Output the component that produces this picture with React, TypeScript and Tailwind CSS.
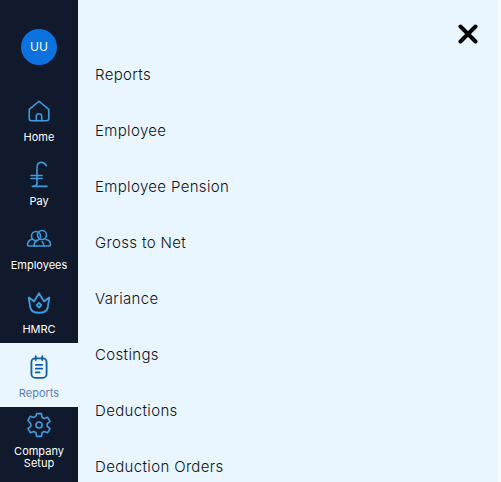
const iconClass = "w-[26px] h-[26px] text-[#3f9be0]";

function HomeIcon() {
	return (
		<svg viewBox="0 0 24 24" fill="none" stroke="currentColor" strokeWidth="1.5" strokeLinejoin="round" strokeLinecap="round" className={iconClass}>
			<path d="M3 10.500 12 3l9 7.500V19a2 2 0 0 1-2 2H5a2 2 0 0 1-2-2z" />
			<path d="M9.500 21v-4a2.500 2.500 0 0 1 5 0v4" />
		</svg>
	);
}

function PoundIcon() {
	return (
		<svg viewBox="0 0 24 24" fill="none" stroke="currentColor" strokeWidth="1.2" strokeLinecap="round" strokeLinejoin="round" className="w-[32px] h-[32px] text-[#3f9be0]">
			<path d="M17.500 5c-1-2-2.500-2.500-4-2.500-2 0-3 2-3 4.500v11c0 1.500-1.500 2.500-3.500 2.500h11" />
			<path d="M6 12.400h8.300" />
			<path d="M6 14.600h8.300" />
		</svg>
	);
}

function PeopleIcon() {
	return (
		<svg viewBox="0 0 26 24" fill="none" stroke="currentColor" strokeWidth="1.6" strokeLinecap="round" strokeLinejoin="round" className="w-[26px] h-[24px] text-[#3f9be0]">
			<circle cx="10" cy="9" r="4.500" />
			<circle cx="16" cy="8" r="4.500" />
			<path d="M6.500 12C3.500 13 1.500 15 1.500 17.500c0 1.200.8 1.500 1.700 1.500h19.600c.9 0 1.700-.3 1.700-1.500 0-2.500-2-4.500-4.500-5" />
			<path d="M8 19c0-2.500 1-4.500 3-5.500M18 19c0-2-1-3.500-2-4.500" />
		</svg>
	);
}

function CrownIcon() {
	return (
		<svg viewBox="0 0 24 24" fill="none" stroke="currentColor" strokeWidth="1.7" strokeLinecap="round" strokeLinejoin="round" className={iconClass}>
			<path d="M2.500 7 7.500 10.500 12 3l4.500 7.500L21.500 7l-1.500 9.500c-.8 2.800-4 4.500-8 4.500s-7.200-1.700-8-4.500z" />
			<path d="M12 11.800 14.200 14 12 16.200 9.800 14z" />
		</svg>
	);
}

function ReportIcon() {
	return (
		<svg viewBox="0 0 24 24" fill="none" stroke="currentColor" strokeWidth="1.7" strokeLinecap="round" strokeLinejoin="round" className="w-[26px] h-[26px] text-[#0f5fa8]">
			<rect x="5" y="4" width="14" height="18" rx="3.500" />
			<path d="M9 2v3.500M15 2v3.500" />
			<path d="M9 10h6M9 13.500h6M9 17h3.500" />
		</svg>
	);
}

function GearIcon() {
	return (
		<svg viewBox="0 0 24 24" fill="none" stroke="currentColor" strokeWidth="1.5" strokeLinecap="round" strokeLinejoin="round" className="w-[26px] h-[26px] text-[#3f9be0]">
			<path d="M9.800 1.500h4.400l.6 3.300 2 1.200 3.200-1.100 2.200 3.800-2.600 2.100v2.400l2.600 2.100-2.200 3.800-3.200-1.100-2 1.200-.6 3.300H9.800l-.6-3.300-2-1.200-3.200 1.100-2.200-3.800 2.600-2.100v-2.400L1.800 7.700 4 3.900l3.200 1.100 2-1.200z" />
			<circle cx="12" cy="12" r="2.800" />
		</svg>
	);
}

const navItems = [
	{ label: "Home", icon: HomeIcon },
	{ label: "Pay", icon: PoundIcon },
	{ label: "Employees", icon: PeopleIcon },
	{ label: "HMRC", icon: CrownIcon },
	{ label: "Reports", icon: ReportIcon, active: true },
	{ label: "Company Setup", icon: GearIcon, compact: true },
];

const links = [
	"Reports",
	"Employee",
	"Employee Pension",
	"Gross to Net",
	"Variance",
	"Costings",
	"Deductions",
	"Deduction Orders",
];

export default function App() {
	return (
		<div className="flex h-[482px] w-[501px] overflow-hidden bg-[#e9f6ff] font-['Inter',sans-serif]">
			{/* Sidebar */}
			<aside className="flex w-[78px] shrink-0 flex-col items-center overflow-hidden bg-[#111a2c] pt-[29px]">
				<div className="mb-[22px] flex h-9 w-9 items-center justify-center rounded-full bg-[#0b72e0] text-xs text-white">
					UU
				</div>
				{navItems.map((item) => {
					const Icon = item.icon;
					return (
						<div
							key={item.label}
							className={`flex h-16 w-full shrink-0 flex-col items-center text-center text-[11px] leading-3 ${
								item.compact ? "pt-[5px]" : "pt-[11px]"
							} ${item.active ? "bg-[#e9f6ff] text-[#5b80ab]" : "text-white"}`}
						>
							<div className="flex h-[26px] items-center justify-center">
								<Icon />
							</div>
							<span className="mt-[7px] w-[60px]">{item.label}</span>
						</div>
					);
				})}
			</aside>

			{/* Submenu */}
			<main className="flex-1 text-[15px] font-light tracking-[0.35px] text-[#0b1220]">
				<div className="flex h-[47px] justify-end pr-[20px] pt-6">
					<svg viewBox="0 0 20 20" fill="none" stroke="#000" strokeWidth="4" strokeLinecap="round" className="h-5 w-5">
						<path d="M2.500 2.500l15 15M17.500 2.500l-15 15" />
					</svg>
				</div>
				{links.map((link) => (
					<div key={link} className="flex h-14 items-center pl-[17px]">
						{link}
					</div>
				))}
			</main>

			{/* Scrollbar track */}
			<div className="w-[3px] shrink-0 bg-[#f4faff]" />
		</div>
	);
}
